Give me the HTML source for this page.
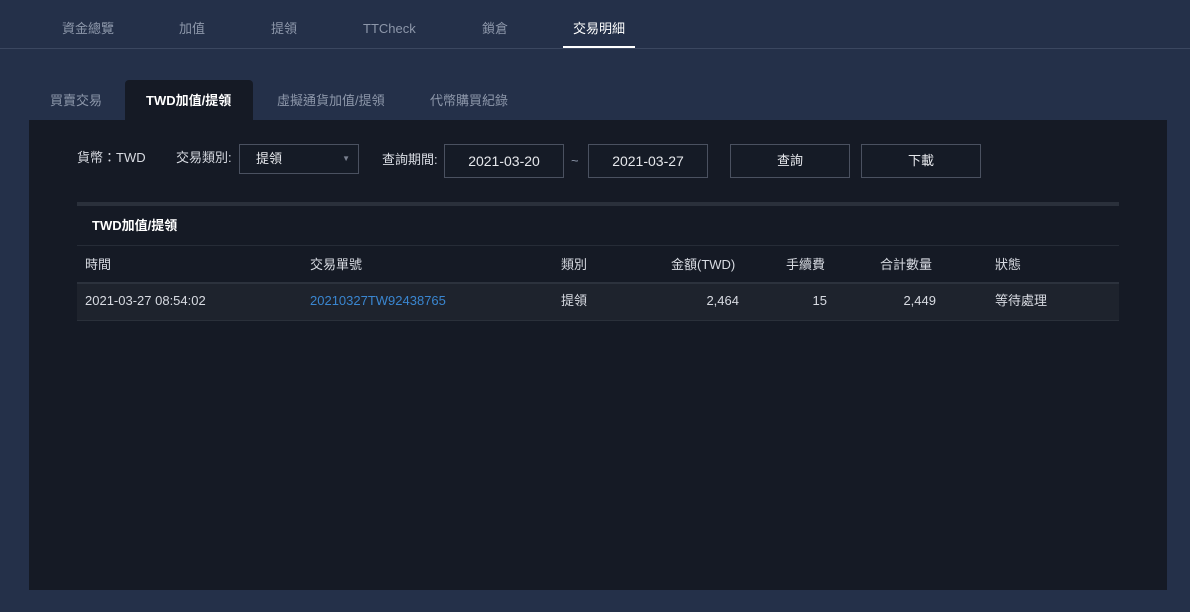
<!DOCTYPE html>
<html><head><meta charset="utf-8"><style>
*{margin:0;padding:0;box-sizing:border-box}
body{width:1190px;height:612px;background:#243049;font-family:"Liberation Sans","Noto Sans CJK TC",sans-serif;font-size:13px;color:#d8dbe2;position:relative;overflow:hidden}
.a{position:absolute;white-space:nowrap;line-height:18px}
.nav{color:#8d97aa;font-size:13px;top:20px}
.sub{color:#8d97aa;font-size:13px;top:92px}
.box{position:absolute;border:1px solid #4a5160;background:#151b26;color:#e6e8ec;font-size:14px;text-align:center;line-height:32px;height:34px}
.th{top:256px;color:#d8dbe2}
.td{top:292px;color:#d8dbe2}
</style></head><body>
<div class="a" style="left:0;top:48px;width:1190px;height:1px;background:#3b4760"></div>
<div class="a nav" style="left:62px">資金總覽</div>
<div class="a nav" style="left:179px">加值</div>
<div class="a nav" style="left:271px">提領</div>
<div class="a nav" style="left:363px">TTCheck</div>
<div class="a nav" style="left:482px">鎖倉</div>
<div class="a nav" style="left:573px;color:#fff">交易明細</div>
<div class="a" style="left:563px;top:46px;width:72px;height:2px;background:#fff"></div>

<div class="a" style="left:125px;top:80px;width:128px;height:41px;background:#151a25;border-radius:4px 4px 0 0"></div>
<div class="a sub" style="left:50px">買賣交易</div>
<div class="a sub" style="left:146px;color:#fff;font-weight:bold">TWD加值/提領</div>
<div class="a sub" style="left:277px">虛擬通貨加值/提領</div>
<div class="a sub" style="left:430px">代幣購買紀錄</div>

<div class="a" style="left:29px;top:120px;width:1138px;height:470px;background:#151a25"></div>

<div class="a" style="left:77px;top:149px">貨幣：TWD</div>
<div class="a" style="left:176px;top:149px">交易類別:</div>
<div class="box" style="left:239px;top:144px;width:120px;text-align:left;padding-left:16px;height:30px;line-height:28px;font-size:13px">提領<span style="position:absolute;right:8px;top:0;font-size:8px;color:#7a8190">▼</span></div>
<div class="a" style="left:382px;top:151px">查詢期間:</div>
<div class="box" style="left:444px;top:144px;width:120px">2021-03-20</div>
<div class="a" style="left:571px;top:152px;color:#8d97aa">~</div>
<div class="box" style="left:588px;top:144px;width:120px">2021-03-27</div>
<div class="box" style="left:730px;top:144px;width:120px;font-size:13px">查詢</div>
<div class="box" style="left:861px;top:144px;width:120px;font-size:13px">下載</div>

<div class="a" style="left:77px;top:202px;width:1042px;height:4px;background:#2a303b"></div>
<div class="a" style="left:92px;top:217px;color:#fff;font-weight:bold">TWD加值/提領</div>
<div class="a" style="left:77px;top:245px;width:1042px;height:1px;background:#262c37"></div>
<div class="a th" style="left:85px">時間</div>
<div class="a th" style="left:310px">交易單號</div>
<div class="a th" style="left:561px">類別</div>
<div class="a th" style="left:671px">金額(TWD)</div>
<div class="a th" style="left:786px">手續費</div>
<div class="a th" style="left:880px">合計數量</div>
<div class="a th" style="left:995px">狀態</div>
<div class="a" style="left:77px;top:282px;width:1042px;height:39px;background:#1e232d;border-top:2px solid #2c323d;border-bottom:1px solid #2a303a"></div>
<div class="a td" style="left:85px">2021-03-27 08:54:02</div>
<div class="a td" style="left:310px;color:#3a86d0">20210327TW92438765</div>
<div class="a td" style="left:561px">提領</div>
<div class="a td" style="left:639px;width:100px;text-align:right">2,464</div>
<div class="a td" style="left:727px;width:100px;text-align:right">15</div>
<div class="a td" style="left:836px;width:100px;text-align:right">2,449</div>
<div class="a td" style="left:995px">等待處理</div>
</body></html>
